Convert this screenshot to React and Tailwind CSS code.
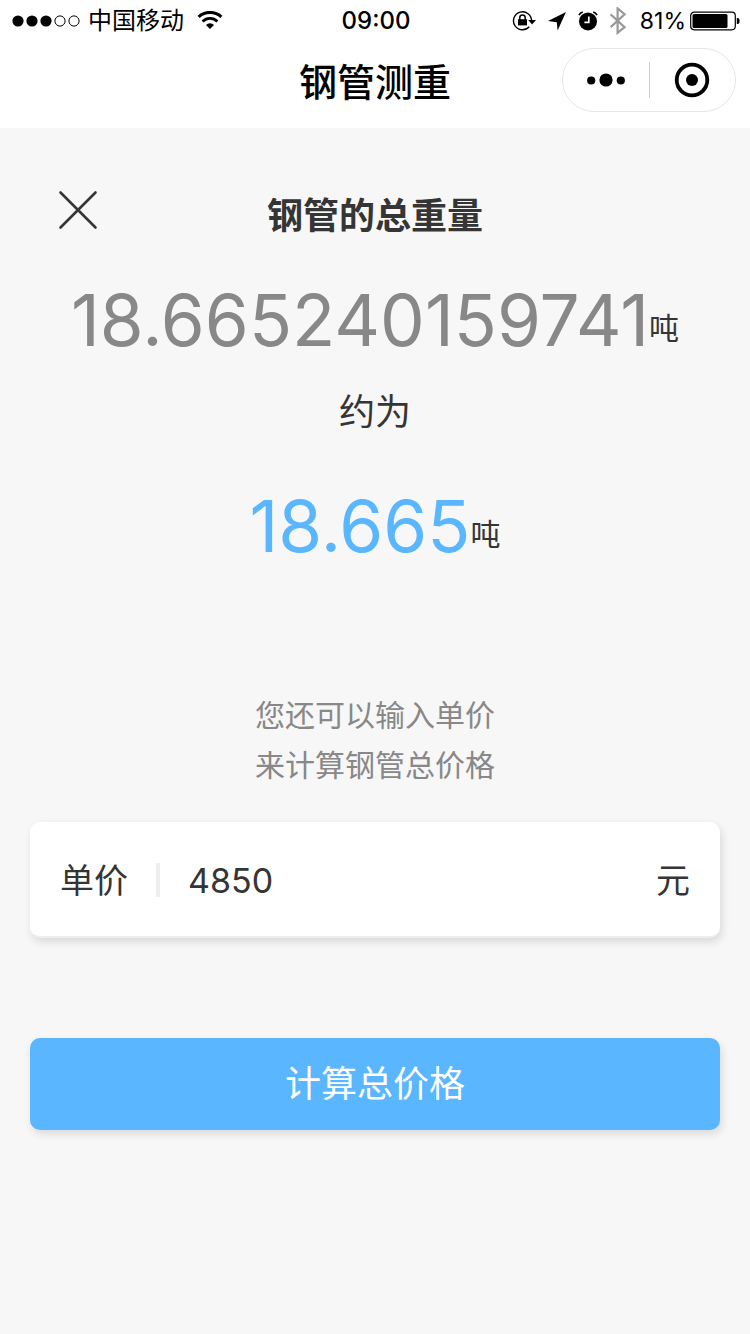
import React, { useState } from 'react';

const StatusBar = () => {
  return (
    <div className="grid h-10 grid-cols-3 items-center bg-white pt-0.5 pl-3 pr-2.5 text-2xl text-black">
      <div className="flex items-center gap-2">
        <svg width="68" height="12" viewBox="0 0 68 12" aria-hidden="true">
          <circle cx="6" cy="6" r="5.6" />
          <circle cx="20" cy="6" r="5.6" />
          <circle cx="34" cy="6" r="5.6" />
          <circle cx="48" cy="6" r="5.1" fill="none" stroke="#000" />
          <circle cx="62" cy="6" r="5.1" fill="none" stroke="#000" />
        </svg>
        <span className="whitespace-nowrap">中国移动</span>
        <svg width="32" height="20" viewBox="0 0 32 20" aria-hidden="true">
          <path d="M6.6 5.8a17 17 0 0 1 22.8 0" fill="none" stroke="#000" strokeWidth="3" />
          <path d="M10.6 10.4a10.6 10.6 0 0 1 14.8 0" fill="none" stroke="#000" strokeWidth="2.8" />
          <path d="M18 18l-4-4a5.6 5.6 0 0 1 8 0z" />
        </svg>
      </div>
      <div className="text-center font-medium">09:00</div>
      <div className="flex items-center justify-end gap-2.5">
        {/* rotation lock */}
        <svg width="26" height="20" viewBox="0 0 26 20" className="shrink-0" aria-hidden="true">
          <path d="M17.2 15.8A9 9 0 1 1 19.5 10" fill="none" stroke="#000" strokeWidth="1.4" />
          <path d="M16.2 9h7.8l-3.9 4.4z" />
          <path d="M6 8.2h9v6.2H6z" />
          <path d="M7.8 9V6.8a2.7 2.7 0 0 1 5.4 0V9" fill="none" stroke="#000" strokeWidth="1.5" />
        </svg>
        {/* location */}
        <svg width="20" height="20" viewBox="0 0 20 20" className="shrink-0" aria-hidden="true">
          <path d="M18 1L0 10l8.8 1.2 0.8 8.2z" />
        </svg>
        {/* alarm */}
        <svg width="22" height="20" viewBox="0 0 22 20" className="shrink-0" aria-hidden="true">
          <circle cx="10" cy="10.4" r="9" />
          <path d="M1 4.2Q2.2 1.8 4.8 1M15.2 1q2.6 0.8 3.8 3.2" fill="none" stroke="#000" strokeWidth="1.7" />
          <path d="M10.8 5.4v6H6.4" fill="none" stroke="#fff" strokeWidth="1.7" />
        </svg>
        {/* bluetooth */}
        <svg width="20" height="28" viewBox="0 0 20 28" className="shrink-0" aria-hidden="true">
          <path d="M0.6 7.2l14 13L7.6 25.8V1.4l7 5.8L0.6 20.2" fill="none" stroke="#999" strokeWidth="2.2" />
        </svg>
        <div className="flex items-center gap-1">
          <span className="text-[23px]">81%</span>
          <svg width="50" height="20" viewBox="0 0 50 20" className="shrink-0" aria-hidden="true">
            <rect x="0.7" y="1.2" width="44.6" height="17.6" rx="3.5" fill="none" stroke="#000" strokeWidth="1.2" />
            <rect x="2.5" y="3" width="35" height="14" rx="1.5" />
            <path d="M46.8 7h0.7a2 2 0 0 1 2 2v2a2 2 0 0 1-2 2h-0.7z" />
          </svg>
        </div>
      </div>
    </div>
  );
};

const NavBar = () => {
  return (
    <header className="grid h-22 grid-cols-[1fr_auto_1fr] items-start bg-white px-3.5 pt-2 text-black">
      <h1 className="col-start-2 text-[38px] leading-17 font-medium">钢管测重</h1>
      <div className="flex h-16 w-[174px] items-center justify-self-end rounded-full border border-[#e5e5e5]">
        <button type="button" aria-label="更多" className="flex flex-1 justify-center">
          <svg width="38" height="14" viewBox="0 0 38 14">
            <circle cx="4.2" cy="7.5" r="4.1" />
            <circle cx="19" cy="7" r="6.6" />
            <circle cx="33.8" cy="7.5" r="4.1" />
          </svg>
        </button>
        <div className="h-9 w-px bg-[#cccccc]"></div>
        <button type="button" aria-label="关闭小程序" className="flex flex-1 justify-center">
          <svg width="36" height="36" viewBox="0 0 36 36">
            <circle cx="18" cy="18" r="15.3" fill="none" stroke="#000" strokeWidth="3.8" />
            <circle cx="18" cy="18" r="6" />
          </svg>
        </button>
      </div>
    </header>
  );
};

const Weight = ({ value, className }) => {
  return (
    <p className="flex items-end justify-center">
      <span className={`text-[71px] leading-24 font-normal ${className}`}>{value}</span>
      <span className="text-[30px] leading-20">吨</span>
    </p>
  );
};

const App = () => {
  const [price, setPrice] = useState('4850');

  return (
    <div className="flex min-h-screen flex-col bg-[#f7f7f7] font-['Inter','Noto_Sans_CJK_SC',sans-serif] text-[#353535]">
      <StatusBar />
      <NavBar />
      <main className="flex-1 px-[30px] pt-14">
        <div className="grid grid-cols-[1fr_auto_1fr] items-start px-7">
          <button type="button" aria-label="关闭" className="justify-self-start pt-1.5">
            <svg width="40" height="40" viewBox="0 0 40 40">
              <path d="M2.5 2.5l35 35M37.5 2.5l-35 35" fill="none" stroke="#353535" strokeWidth="2.6" strokeLinecap="round" />
            </svg>
          </button>
          <h2 className="text-4xl leading-16 font-bold">钢管的总重量</h2>
        </div>

        <div className="mt-6">
          <Weight value="18.665240159741" className="text-[#888888]" />
        </div>
        <p className="mt-3.5 text-center text-4xl leading-15">约为</p>
        <div className="mt-9">
          <Weight value="18.665" className="text-[#59b6ff]" />
        </div>

        <p className="mt-29 text-center text-[30px] leading-[50px] text-[#888888]">
          您还可以输入单价
          <br />
          来计算钢管总价格
        </p>

        <div className="mt-8 flex h-29 items-center rounded-[10px] border-b-2 border-[#eeeeee] bg-white px-[30px] pt-0.5 text-[34px] shadow-[2px_4px_8px_rgba(0,0,0,0.12)]">
          <label htmlFor="price" className="shrink-0">单价</label>
          <div className="mx-7 h-[34px] w-1 shrink-0 bg-[#eeeeee]"></div>
          <input
            id="price"
            type="text"
            inputMode="decimal"
            value={price}
            onChange={(e) => setPrice(e.target.value)}
            className="min-w-0 flex-1 bg-transparent outline-none"
          />
          <span>元</span>
        </div>

        <button
          type="button"
          className="mt-[100px] h-23 w-full rounded-[10px] bg-[#59b6ff] text-4xl text-white shadow-[2px_4px_8px_rgba(0,0,0,0.12)]"
        >
          计算总价格
        </button>
      </main>
    </div>
  );
};

export default App;
